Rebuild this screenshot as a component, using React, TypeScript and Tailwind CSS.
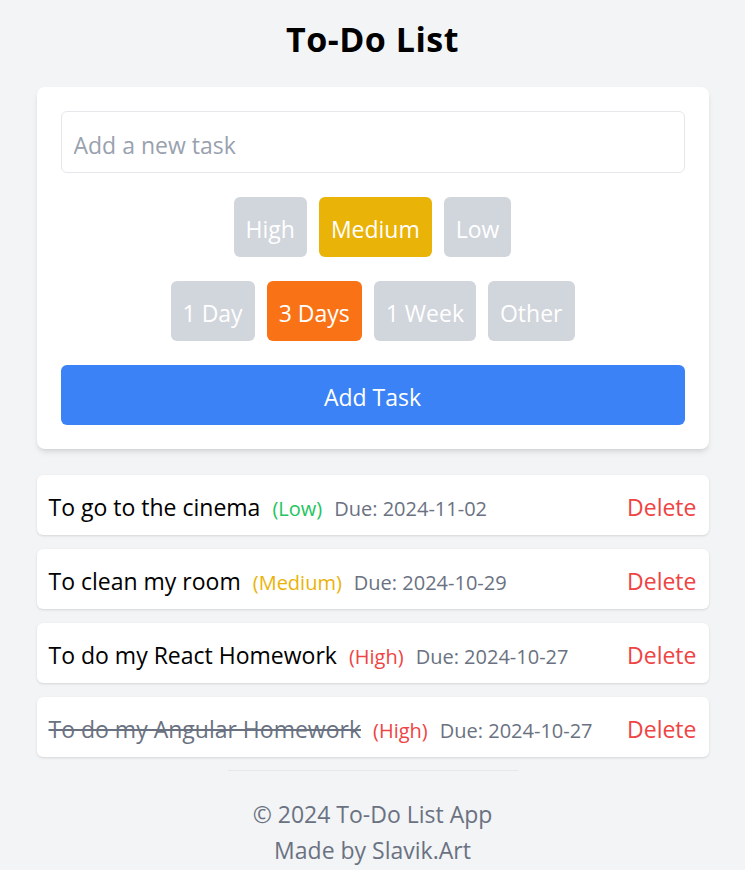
import React from "react";

type Task = { title: string; priority: "Low" | "Medium" | "High"; due: string; done?: boolean };

const tasks: Task[] = [
  { title: "To go to the cinema", priority: "Low", due: "2024-11-02" },
  { title: "To clean my room", priority: "Medium", due: "2024-10-29" },
  { title: "To do my React Homework", priority: "High", due: "2024-10-27" },
  { title: "To do my Angular Homework", priority: "High", due: "2024-10-27", done: true },
];

const prColor: Record<string, string> = {
  Low: "text-[#22c55e]",
  Medium: "text-[#eab308]",
  High: "text-[#ef4444]",
};

export default function App() {
  return (
    <div className="min-h-screen bg-[#f3f4f6] font-['Open_Sans',sans-serif] text-[23px] pb-2">
      <h1 className="text-center text-[34px] tracking-[0.5px] font-bold leading-[40px] text-black pt-[19px] mb-[28px]">
        To-Do List
      </h1>
      <div className="max-w-2xl mx-auto">
        <div className="bg-white rounded-lg shadow-md p-6">
          <input
            type="text"
            placeholder="Add a new task"
            className="w-full border border-gray-200 rounded-md px-3 pt-[15px] pb-[9px] leading-[36px] outline-none placeholder:text-gray-400"
          />
          <div className="mt-6 flex justify-center gap-3">
            <button className="bg-gray-300 text-white rounded-md px-3 pt-[14px] pb-[10px] leading-[36px]">High</button>
            <button className="bg-[#eab308] text-white rounded-md px-3 pt-[14px] pb-[10px] leading-[36px]">Medium</button>
            <button className="bg-gray-300 text-white rounded-md px-3 pt-[14px] pb-[10px] leading-[36px]">Low</button>
          </div>
          <div className="mt-6 flex justify-center gap-3">
            <button className="bg-gray-300 text-white rounded-md px-3 pt-[14px] pb-[10px] leading-[36px]">1 Day</button>
            <button className="bg-[#f97316] text-white rounded-md px-3 pt-[14px] pb-[10px] leading-[36px]">3 Days</button>
            <button className="bg-gray-300 text-white rounded-md px-3 pt-[14px] pb-[10px] leading-[36px]">1 Week</button>
            <button className="bg-gray-300 text-white rounded-md px-3 pt-[14px] pb-[10px] leading-[36px]">Other</button>
          </div>
          <button className="mt-6 w-full bg-[#3b82f6] text-white rounded-md pt-[14px] pb-[10px] leading-[36px]">
            Add Task
          </button>
        </div>
        <ul className="mt-[26px] flex flex-col gap-[14px]">
          {tasks.map((t) => (
            <li
              key={t.title}
              className="h-[60px] bg-white rounded-md shadow px-3 pt-[14px] pb-[10px] leading-[36px] flex items-baseline justify-between"
            >
              <div className="flex items-baseline">
                <span className={t.done ? "text-gray-500 line-through decoration-2" : "text-black"}>{t.title}</span>
                <span className={"ml-3 text-[20px] leading-[20px] " + prColor[t.priority]}>({t.priority})</span>
                <span className="ml-3 text-[20px] leading-[20px] text-gray-500">Due: {t.due}</span>
              </div>
              <button className="text-[#ef4444] leading-[36px]">Delete</button>
            </li>
          ))}
        </ul>
        <div className="mt-[13px] border-t border-gray-200 w-[290px] mx-auto" />
        <footer className="pt-[25px] text-center text-gray-500 leading-[36px]">
          <p>© 2024 To-Do List App</p>
          <p>Made by Slavik.Art</p>
        </footer>
      </div>
    </div>
  );
}
